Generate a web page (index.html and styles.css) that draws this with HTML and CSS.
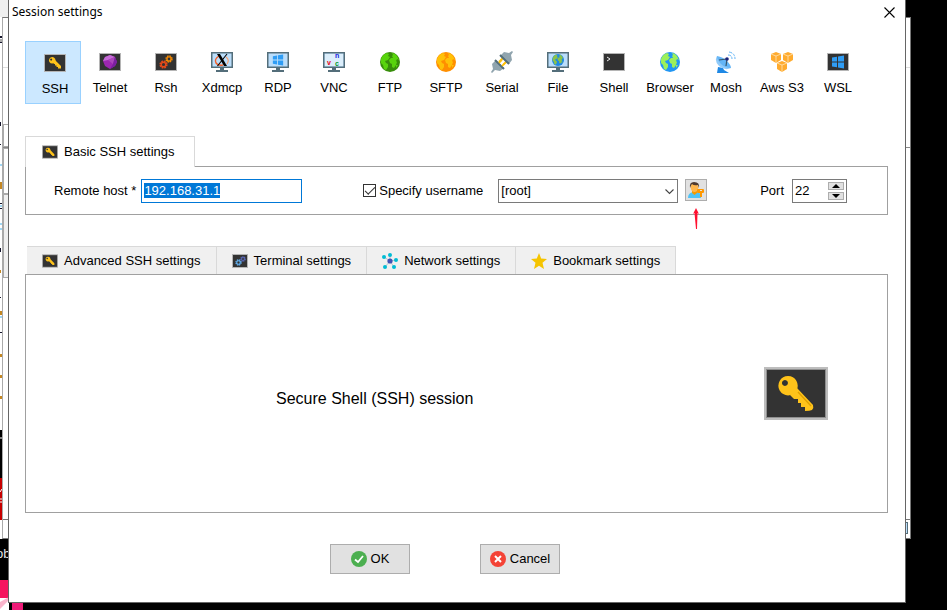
FILE: index.html
```html
<!DOCTYPE html>
<html lang="en">
<head>
    <meta charset="UTF-8">
    <meta name="viewport" content="width=device-width, initial-scale=1.0">
    <title>Session settings</title>
    <link rel="stylesheet" href="styles.css">
</head>
<body>
    <!-- Shared icon shapes -->
    <svg class="sprite" aria-hidden="true">
        <symbol id="key" viewBox="0 0 64 53">
            <rect width="64" height="53" fill="#bdbdbd"/>
            <rect x="2" y="2" width="60" height="49" fill="#8f8f8f"/>
            <rect x="3" y="3" width="58" height="47" fill="#333"/>
            <path d="M26 28L33 21L49 38Q50 41 48 43Q46 44 41 44V40H37V36H34V32H30Z" fill="#ffc31a"/>
            <path d="M34 25L47 39" stroke="#dfa000" stroke-width="1.3"/>
            <path fill-rule="evenodd" d="M24 9a9.7 9.7 0 1 0 .1 0zM21 13a3 3 0 1 1-.1 0z" fill="#ffc31a"/>
        </symbol>
        <symbol id="key-small" viewBox="0 0 22 18">
            <rect x=".5" y=".5" width="21" height="17" fill="#333" stroke="#b5b5b5"/>
            <path d="M9 8l2-2 6 6v2.500h-3v-1.500h-1.500v-1.500h-1.500v-1.500h-1z" fill="#ffc31a"/>
            <path fill-rule="evenodd" d="M8.200 3a3.300 3.300 0 1 0 .1 0zM7.200 4.400a1 1 0 1 1-.1 0z" fill="#ffc31a"/>
        </symbol>
        <symbol id="frame" viewBox="0 0 22 18">
            <rect x=".5" y=".5" width="21" height="17" fill="#333" stroke="#b5b5b5"/>
        </symbol>
        <symbol id="monitor" viewBox="0 0 22 20">
            <rect width="22" height="16" fill="#546e7a"/>
            <rect x="1.500" y="1.500" width="19" height="13" fill="#bbdefb"/>
            <path d="M9 16h4v2h4v2H5v-2h4z" fill="#546e7a"/>
        </symbol>
        <symbol id="windows" viewBox="0 0 14 14">
            <path d="M1 2.500L6 1.700V6.500H1zM7 1.500L13 .5V6.500H7zM1 7.500H6V12.300L1 11.500zM7 7.500H13V13.500L7 12.500z" fill="#2f9df5"/>
        </symbol>
        <symbol id="land" viewBox="0 0 20 20">
            <path d="M1 7Q3 2 7 1l2 1-1 2 2 1-2 3-3 1 1 2 2 1v3l-2 3-2-1-1-4-2-2zM12 1q3 0 5 3l2 4-2-1-1 2 1 1-1 3-2 3-2-1v-3l-2-1-1-3 2-2 2 0-1-2 1-1zM16 13l2 0-2 3z"/>
        </symbol>
        <symbol id="gear" viewBox="0 0 12 12">
            <circle cx="6" cy="6" r="4.400" fill="none" stroke="currentColor" stroke-width="2.200" stroke-dasharray="2.300 1.156"/>
            <circle cx="6" cy="6" r="3" fill="none" stroke="currentColor" stroke-width="1.800"/>
        </symbol>
    </svg>

    <!-- Windows left open behind the dialog -->
    <div class="desktop" aria-hidden="true">
        <div class="edge">
            <svg width="9" height="610" viewBox="0 0 9 610">
                <path d="M0 0h9v610H0z" fill="#fff"/>
                <path d="M0 0h9v17H0z" fill="#f0f0f0"/>
                <path d="M0 430h9v48H0zM0 539h9v41H0z" fill="#000"/>
                <path d="M0 478h2v42H0z" fill="#c80000"/>
                <path d="M0 438h2M0 492l2-3M0 499h2M0 502h2" stroke="#fff"/>
                <path d="M0 580h9v18H0z" fill="#f5155f"/>
                <path d="M0 602l9-5v3l-9 9z" fill="#f9b4cb"/>
                <path d="M0 36h2v2H0zM0 42h2v1H0zM0 122h1v4H0zM0 144h1v1H0zM0 203h2v1H0zM0 208h2v1H0zM0 248h1v4H0zM0 297h1v1H0zM0 332h2v1H0z" fill="#14142b"/>
                <path d="M0 39h2v3H0z" fill="#aaa"/>
                <path d="M0 165h2M0 206h2M0 224h2M0 229h2M0 317h2" stroke="#42aee8"/>
                <path d="M0 182h2v7H0zM0 270h1v3H0zM0 311h2v4H0zM0 354h2v3H0zM0 375h2v3H0zM0 396h2v3H0z" fill="#c48722"/>
            </svg>
        </div>
        <div class="back-window">
            <span class="rule rule-top"></span>
            <span class="rule rule-mid"></span>
            <div class="status"><span></span></div>
            <i class="stub stub-one"></i>
            <i class="stub stub-two"></i>
            <i class="stub stub-three"></i>
        </div>
        <div class="terminal">ob</div>
        <div class="pink"></div>
    </div>

    <main class="dialog">
        <header class="titlebar">
            <h1>Session settings</h1>
            <button class="close" type="button" aria-label="Close">
                <svg width="11" height="11" viewBox="0 0 11 11"><path d="M.5.5l10 10M10.500.5l-10 10" stroke="#000" stroke-width="1.100"/></svg>
            </button>
        </header>

        <nav class="toolbar">
            <button class="kind selected" type="button">
                <svg width="22" height="22"><use href="#key-small"/></svg>
                <span>SSH</span>
            </button>
            <button class="kind" type="button">
                <svg width="22" height="22" viewBox="0 0 22 18">
                    <use href="#frame" width="22" height="18"/>
                    <path d="M11 2l5 2 2 5-2 4-5 3-5-3-2-5 2-4z" fill="#9c27b0"/>
                    <path d="M11 2L6 4 4 8l5-1zM9 7l7-3-5-2z" fill="#c56cd6"/>
                    <path d="M9 7l7-3-2 7z" fill="#ab47bc"/>
                    <path d="M14 11l-3 5 5-3 2-4-2-5z" fill="#7b1fa2"/>
                </svg>
                <span>Telnet</span>
            </button>
            <button class="kind" type="button">
                <svg width="22" height="22" viewBox="0 0 22 18">
                    <use href="#frame" width="22" height="18"/>
                    <use class="gear-red" href="#gear" x="4" y="7" width="9" height="9"/>
                    <use class="gear-orange" href="#gear" x="10" y="2" width="8" height="8"/>
                </svg>
                <span>Rsh</span>
            </button>
            <button class="kind" type="button">
                <svg width="22" height="22" viewBox="0 0 22 20">
                    <use href="#monitor" width="22" height="20"/>
                    <path d="M8 4Q3 7 5 11q2 3 7 2" fill="none" stroke="#f4602a" stroke-width="1.400"/>
                    <path d="M15 5q4 3 1 7" fill="none" stroke="#f9a06f" stroke-width="1.200"/>
                    <path d="M6 2h3l7 12h-3z" fill="#000"/>
                    <path d="M16 2L6.500 14" stroke="#000" stroke-width="1.100"/>
                </svg>
                <span>Xdmcp</span>
            </button>
            <button class="kind" type="button">
                <svg width="22" height="22" viewBox="0 0 22 20">
                    <use href="#monitor" width="22" height="20"/>
                    <use href="#windows" x="5" y="2" width="12" height="12"/>
                </svg>
                <span>RDP</span>
            </button>
            <button class="kind" type="button">
                <svg width="22" height="22" viewBox="0 0 22 20">
                    <use href="#monitor" width="22" height="20"/>
                    <rect x="2" y="2" width="18" height="12" fill="#dceefb"/>
                    <g class="vnc">
                        <text x="4" y="13" fill="#e60012">v</text>
                        <text x="12" y="6" fill="#1420e0">n</text>
                        <text x="12" y="14" fill="#00962b">c</text>
                    </g>
                </svg>
                <span>VNC</span>
            </button>
            <button class="kind" type="button">
                <svg width="20" height="22" viewBox="0 0 20 20">
                    <circle cx="10" cy="10" r="10" fill="#388e0b"/>
                    <use href="#land" width="20" height="20" fill="#58d40c"/>
                </svg>
                <span>FTP</span>
            </button>
            <button class="kind" type="button">
                <svg width="20" height="22" viewBox="0 0 20 20">
                    <circle cx="10" cy="10" r="10" fill="#ff8f00"/>
                    <use href="#land" width="20" height="20" fill="#ffc107"/>
                </svg>
                <span>SFTP</span>
            </button>
            <button class="kind" type="button">
                <svg width="22" height="22" viewBox="0 0 22 22">
                    <path d="M8 11l4-4M12 14l4-4" stroke="#ffc107" stroke-width="2"/>
                    <path d="M0 21l2-3-1-5 4-4 8 8-4 3-5-1-3 3z" fill="#90a4ae"/>
                    <path d="M22 1l-2 3 1 5-3 4-9-8 4-4 5 1 3-2z" fill="#90a4ae"/>
                    <path d="M4 9l9 9M9 4l9 9" stroke="#546e7a" stroke-width="2"/>
                    <path d="M8 12l3-3M11 15l3-3" stroke="#ffc107" stroke-width="1.500"/>
                </svg>
                <span>Serial</span>
            </button>
            <button class="kind" type="button">
                <svg width="22" height="22" viewBox="0 0 22 20">
                    <use href="#monitor" width="22" height="20"/>
                    <circle cx="11" cy="8" r="6" fill="#1e88e5"/>
                    <use href="#land" x="5" y="2" width="12" height="12" fill="#8bc34a"/>
                </svg>
                <span>File</span>
            </button>
            <button class="kind" type="button">
                <svg width="22" height="22" viewBox="0 0 22 18">
                    <use href="#frame" width="22" height="18"/>
                    <path d="M4 4l3 2-3 2" fill="none" stroke="#eee"/>
                </svg>
                <span>Shell</span>
            </button>
            <button class="kind" type="button">
                <svg width="20" height="22" viewBox="0 0 20 20">
                    <circle cx="10" cy="10" r="10" fill="#2196f3"/>
                    <use href="#land" width="20" height="20" fill="#9cf05a"/>
                </svg>
                <span>Browser</span>
            </button>
            <button class="kind" type="button">
                <svg width="22" height="22" viewBox="0 0 22 22">
                    <path d="M3 16l5 1 1 2 5 3H2z" fill="#1e88e5"/>
                    <path d="M2 5q-3 5 2 10 6 5 12 2z" fill="#90caf9"/>
                    <path d="M2 5q6 1 10 5 4 4 4 7-6 0-10-4T2 5z" fill="#64b5f6"/>
                    <path d="M4 9l8-1-1 7" fill="none" stroke="#37566b" stroke-width="1.200"/>
                    <circle cx="12" cy="8" r="1.800" fill="#1a237e"/>
                    <path d="M13 4q4 0 4 4M14 1q6 1 6 7" fill="none" stroke="#64b5f6" stroke-dasharray="3 1"/>
                </svg>
                <span>Mosh</span>
            </button>
            <button class="kind" type="button">
                <svg width="24" height="22" viewBox="0 0 24 22">
                    <g id="cube">
                        <path d="M1 3l5-2 5 2v6l-5 3-5-3z" fill="#ffab2e"/>
                        <path d="M1 3l5 2 5-2M6 5v7" fill="none" stroke="#ffe3b5" stroke-width=".8"/>
                    </g>
                    <use href="#cube" x="12"/>
                    <use href="#cube" x="6" y="9"/>
                </svg>
                <span>Aws S3</span>
            </button>
            <button class="kind" type="button">
                <svg width="22" height="22" viewBox="0 0 22 18">
                    <use href="#frame" width="22" height="18"/>
                    <use href="#windows" x="4" y="2" width="14" height="14"/>
                </svg>
                <span>WSL</span>
            </button>
        </nav>

        <section class="basic">
            <div class="tabs">
                <button class="tab active" type="button">
                    <svg width="16" height="14"><use href="#key-small"/></svg>
                    Basic SSH settings
                </button>
            </div>
            <form class="fields">
                <div class="field host">
                    <label for="remote-host">Remote host *</label>
                    <input type="text" id="remote-host" value="192.168.31.1" autofocus>
                </div>
                <div class="field user">
                    <input type="checkbox" id="specify-user" checked>
                    <label for="specify-user">Specify username</label>
                    <div class="dropdown">
                        <select id="username" aria-label="Username">
                            <option>[root]</option>
                        </select>
                        <svg width="9" height="6" viewBox="0 0 9 6"><path d="M.5.5l4 4 4-4" fill="none" stroke="#444" stroke-width="1.100"/></svg>
                    </div>
                    <button class="user-button" type="button" aria-label="Manage users">
                        <svg width="18" height="18" viewBox="0 0 18 18">
                            <path d="M1 17q0-5 5-6h4q4 0 4 6z" fill="#4fc3f7"/>
                            <path d="M5 10h5v2l-2.500 2L5 12z" fill="#f59a00"/>
                            <ellipse cx="7.500" cy="6.500" rx="3.800" ry="4.500" fill="#ffb74d"/>
                            <path d="M3 7Q2 1 7 1q6 0 5 6l-1-3q-4 1-6-1Q4 4 3 7z" fill="#4e3a2f"/>
                            <path fill-rule="evenodd" d="M11 8h5q1 0 1 1v2q0 1-1 1h-1v4h-2v-4h-2q-1 0-1-1V9q0-1 1-1zM13 9h2v1h-2z" fill="#ff9800"/>
                        </svg>
                        <svg class="arrow" width="6" height="21" viewBox="0 0 6 21"><path d="M3 0l3 6-1.500-1L4 21H3L1.500 5 0 6z" fill="#ff1030"/></svg>
                    </button>
                </div>
                <div class="field port">
                    <label for="port">Port</label>
                    <div class="spinner">
                        <input type="number" id="port" value="22">
                        <div class="steps">
                            <button type="button" aria-label="Increase port"><svg width="8" height="4" viewBox="0 0 8 4"><path d="M0 4l4-4 4 4z"/></svg></button>
                            <button type="button" aria-label="Decrease port"><svg width="8" height="4" viewBox="0 0 8 4"><path d="M0 0l4 4 4-4z"/></svg></button>
                        </div>
                    </div>
                </div>
            </form>
        </section>

        <section class="details">
            <div class="tabs">
                <button class="tab" type="button">
                    <svg width="16" height="14"><use href="#key-small"/></svg>
                    Advanced SSH settings
                </button>
                <button class="tab" type="button">
                    <svg width="16" height="14" viewBox="0 0 16 14">
                        <rect x=".5" y=".5" width="15" height="13" fill="#333" stroke="#b5b5b5"/>
                        <use class="gear-blue" href="#gear" x="3" y="5" width="7" height="7"/>
                        <use class="gear-indigo" href="#gear" x="8" y="2" width="6" height="6"/>
                    </svg>
                    Terminal settings
                </button>
                <button class="tab" type="button">
                    <svg width="16" height="16" viewBox="0 0 16 16">
                        <path d="M8 8L2 4M8 8V2M8 8l6-1M8 8l4 6M8 8l-5 6" stroke="#b6c6cc"/>
                        <g fill="#00bcd4"><circle cx="2" cy="4" r="2"/><circle cx="8" cy="2" r="2"/><circle cx="14" cy="7" r="2"/><circle cx="12" cy="14" r="2"/><circle cx="3" cy="14" r="2"/></g>
                        <circle cx="8" cy="8" r="2.600" fill="#3f51b5"/>
                    </svg>
                    Network settings
                </button>
                <button class="tab" type="button">
                    <svg width="16" height="16" viewBox="0 0 16 16"><path d="M8 0l2.200 5.600 5.800.4-4.500 3.800L13 16l-5-3.300L3 16l1.500-6.200L0 6l5.800-.4z" fill="#f5c400"/></svg>
                    Bookmark settings
                </button>
            </div>
            <div class="summary">
                <p>Secure Shell (SSH) session</p>
                <svg width="64" height="53"><use href="#key"/></svg>
            </div>
        </section>

        <footer class="actions">
            <button type="button">
                <svg width="16" height="16" viewBox="0 0 16 16"><circle cx="8" cy="8" r="8" fill="#4caf50"/><path d="M4 8.500l3 2.500 5-6" fill="none" stroke="#fff" stroke-width="1.800"/></svg>
                <span>OK</span>
            </button>
            <button type="button">
                <svg width="16" height="16" viewBox="0 0 16 16"><circle cx="8" cy="8" r="8" fill="#f44336"/><path d="M5 5l6 6M11 5l-6 6" stroke="#fff" stroke-width="2"/></svg>
                <span>Cancel</span>
            </button>
        </footer>
    </main>

    <script>
        // Start with the host selected so it can be typed over
        const host = document.getElementById('remote-host');
        host.focus();
        host.select();
    </script>
</body>
</html>
```
FILE: styles.css
```css
* {
    box-sizing: border-box;
}
body {
    margin: 0;
    min-height: 100vh;
    display: flex;
    background: #000;
    color: #000;
    font-family: "Liberation Sans", Arial, sans-serif;
    font-size: 13px;
    line-height: 16px;
    position: relative;
    overflow: hidden;
}
button, input, select {
    font: inherit;
    color: inherit;
    margin: 0;
}
button {
    border: none;
    padding: 0;
    background: none;
}
svg {
    display: block;
    flex: none;
}
.sprite {
    position: absolute;
    width: 0;
    height: 0;
}

/* background windows */
.desktop {
    position: absolute;
    inset: 0;
}
.edge {
    position: absolute;
    left: 0;
    top: 0;
}
.back-window {
    position: absolute;
    left: 2px;
    right: 36px;
    top: 17px;
    bottom: 71px;
    background: #fff;
    border: 1px solid #777;
    border-left-color: #aaa;
}
.rule {
    position: absolute;
    left: 0;
    right: 0;
    height: 1px;
    background: #ddd;
}
.rule-top {
    top: 49px;
}
.rule-mid {
    top: 129px;
    background: #888;
}
.status {
    position: absolute;
    left: 0;
    right: 0;
    bottom: 0;
    height: 19px;
    border-top: 1px solid #777;
}
.status span {
    position: absolute;
    right: 2px;
    top: 2px;
    width: 8px;
    height: 12px;
    background: #bbdefb;
    border: 1px solid #546e7a;
}
.stub {
    position: absolute;
    left: 0;
    width: 10px;
    border: 1px solid #aaa;
    background: #fff;
}
.stub-one {
    top: 106px;
    height: 23px;
}
.stub-two {
    top: 130px;
    height: 46px;
}
.stub-three {
    top: 176px;
    height: 84px;
    background: #f0f0f0;
}
.terminal {
    position: absolute;
    left: -4px;
    top: 546px;
    color: #e6e6e6;
}
.pink {
    position: absolute;
    left: 12px;
    bottom: 0;
    width: 11px;
    height: 8px;
    background: #ee1b78;
}

/* dialog */
.dialog {
    flex: 1;
    position: relative;
    display: flex;
    flex-direction: column;
    margin: 0 41px 7px 8px;
    padding: 0 17px 28px 16px;
    background: #fff;
    border: 1px solid #666;
    border-top: none;
}
.titlebar {
    display: flex;
    justify-content: space-between;
    align-items: center;
    height: 24px;
    margin: 0 -10px 17px -13px;
}
.titlebar h1 {
    margin: 0;
    font-family: "Noto Sans", sans-serif;
    font-size: 12px;
    font-weight: normal;
}
.close {
    display: grid;
    place-items: center;
    width: 17px;
    height: 17px;
}
.toolbar {
    display: flex;
    margin-bottom: 32px;
}
.kind {
    flex: none;
    display: flex;
    flex-direction: column;
    justify-content: space-between;
    align-items: center;
    width: 56px;
    height: 63px;
    padding: 10px 0 8px;
    white-space: nowrap;
}
.kind.selected {
    margin-right: 1px;
    padding: 10px 0 6px 4px;
    background: #cce8ff;
    border: 1px solid #99d1ff;
}
.gear-red {
    color: #e64a19;
}
.gear-orange {
    color: #fb8c00;
}
.gear-blue {
    color: #64b5f6;
}
.gear-indigo {
    color: #5c6bc0;
}
.vnc {
    font-size: 7px;
    font-weight: bold;
}

/* tabs */
.tabs {
    display: flex;
    padding-left: 2px;
}
.tab {
    display: flex;
    align-items: center;
    gap: 6px;
    height: 28px;
    padding: 1px 15px 0;
    background: #f0f0f0;
    border: 1px solid #d9d9d9;
    border-width: 1px 1px 0 0;
    white-space: nowrap;
}
.tab.active {
    height: 31px;
    margin-bottom: -1px;
    padding: 0 19px 0 16px;
    background: #fff;
    border-width: 1px 1px 0;
    position: relative;
}
.basic {
    margin-bottom: 31px;
}
.basic .tabs {
    padding-left: 0;
}

/* basic settings */
.fields {
    display: flex;
    justify-content: space-between;
    align-items: center;
    height: 49px;
    padding: 0 40px 0 28px;
    border: 1px solid #a0a0a0;
}
.field {
    display: flex;
    align-items: center;
}
.host {
    gap: 5px;
    margin-right: 8px;
}
.host input {
    width: 161px;
    height: 24px;
    padding: 0 2px;
    border: 1px solid #0078d7;
    outline: none;
}
.host input::selection {
    background: #0078d7;
    color: #fff;
}
.user input {
    appearance: none;
    width: 13px;
    height: 13px;
    margin-right: 3px;
    border: 1px solid #333;
    background: #fff;
}
.user input:checked::before {
    content: "";
    display: block;
    width: 9px;
    height: 4px;
    margin: 2px 0 0 1px;
    border: solid #333;
    border-width: 0 0 1px 1px;
    transform: rotate(-45deg);
}
.dropdown {
    position: relative;
    margin: 0 7px 0 15px;
}
.dropdown select {
    display: block;
    appearance: none;
    width: 180px;
    height: 24px;
    padding: 0 20px 0 2px;
    border: 1px solid #7a7a7a;
    border-radius: 0;
    background: #fff;
}
.dropdown svg {
    position: absolute;
    right: 4px;
    top: 10px;
    pointer-events: none;
}
.user-button {
    position: relative;
    display: grid;
    place-items: center;
    width: 22px;
    height: 22px;
    margin-bottom: 2px;
    background: #e1e1e1;
    border: 1px solid #adadad;
}
.arrow {
    position: absolute;
    left: 7px;
    top: 28px;
}
.port {
    gap: 8px;
}
.spinner {
    display: flex;
    align-items: center;
    width: 55px;
    height: 24px;
    padding: 0 2px;
    border: 1px solid #7a7a7a;
}
.spinner input {
    appearance: textfield;
    flex: 1;
    min-width: 0;
    padding: 0;
    border: none;
    outline: none;
}
.steps {
    display: grid;
    gap: 2px;
}
.steps button {
    display: grid;
    place-items: center;
    width: 16px;
    height: 8px;
    background: #e1e1e1;
    border: 1px solid #adadad;
}

/* lower panel */
.details {
    flex: 1;
    display: flex;
    flex-direction: column;
}
.summary {
    flex: 1;
    display: flex;
    justify-content: space-between;
    align-items: center;
    padding: 0 59px 0 250px;
    border: 1px solid #a0a0a0;
}
.summary p {
    margin: 10px 0 0;
    font-size: 16px;
}
.actions {
    display: flex;
    justify-content: center;
    gap: 70px;
    margin: 31px 23px 0 0;
}
.actions button {
    display: flex;
    justify-content: center;
    align-items: center;
    gap: 4px;
    width: 80px;
    height: 30px;
    background: #e1e1e1;
    border: 1px solid #adadad;
}
```
